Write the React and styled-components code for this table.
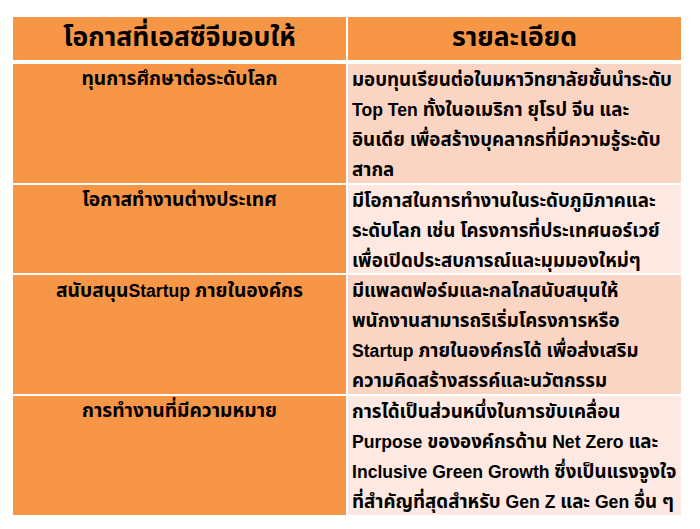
import React from "react";
import styled, { createGlobalStyle } from "styled-components";

const Global = createGlobalStyle`
  html, body { margin: 0; padding: 0; background: #ffffff; }
  body { font-family: "Noto Sans Thai", "Noto Sans", "DejaVu Sans", sans-serif; }
`;

const Page = styled.div`
  width: 700px;
  height: 529px;
  padding: 17px 19px 0 13px;
  box-sizing: border-box;
  background: #ffffff;
`;

const Table = styled.div`
  display: grid;
  grid-template-columns: 333px 333px;
  column-gap: 2px;
  row-gap: 2px;
  width: 668px;
`;

const HeadCell = styled.div`
  background: #f79646;
  height: 43px;
  margin-bottom: 2px;
  display: flex;
  align-items: center;
  justify-content: center;
  font-size: 26.5px;
  font-weight: 700;
  color: #000;
  line-height: 1;
`;

const TitleCell = styled.div`
  background: #f79646;
  height: ${(p) => p.$h}px;
  padding-top: 1px;
  box-sizing: border-box;
  text-align: center;
  font-size: 19.2px;
  font-weight: 700;
  line-height: 30px;
  color: #000;
  white-space: nowrap;
`;

const DetailCell = styled.div`
  background: ${(p) => (p.$alt ? "#fde9e1" : "#fbd5c3")};
  height: ${(p) => p.$h}px;
  padding: 1px 0 0 4px;
  box-sizing: border-box;
  font-size: 18.7px;
  font-weight: 700;
  line-height: 30px;
  color: #000;
`;

const Line = styled.div`
  white-space: nowrap;
`;

const Latin = styled.span`
  font-family: "Liberation Sans", Arial, sans-serif;
  font-size: 17.6px;
  font-weight: 700;
`;

function Mixed({ text }) {
  const parts = text.split(/([A-Za-z](?:[A-Za-z ]*[A-Za-z])?)/);
  return parts.map((p, i) =>
    i % 2 === 1 ? <Latin key={i}>{p}</Latin> : <React.Fragment key={i}>{p}</React.Fragment>
  );
}

const rows = [
  {
    title: "ทุนการศึกษาต่อระดับโลก",
    h: 119,
    lines: [
      "มอบทุนเรียนต่อในมหาวิทยาลัยชั้นนำระดับ",
      "Top Ten ทั้งในอเมริกา ยุโรป จีน และ",
      "อินเดีย เพื่อสร้างบุคลากรที่มีความรู้ระดับ",
      "สากล",
    ],
  },
  {
    title: "โอกาสทำงานต่างประเทศ",
    h: 88,
    lines: [
      "มีโอกาสในการทำงานในระดับภูมิภาคและ",
      "ระดับโลก เช่น โครงการที่ประเทศนอร์เวย์",
      "เพื่อเปิดประสบการณ์และมุมมองใหม่ๆ",
    ],
  },
  {
    title: "สนับสนุนStartup ภายในองค์กร",
    h: 119,
    lines: [
      "มีแพลตฟอร์มและกลไกสนับสนุนให้",
      "พนักงานสามารถริเริ่มโครงการหรือ",
      "Startup ภายในองค์กรได้ เพื่อส่งเสริม",
      "ความคิดสร้างสรรค์และนวัตกรรม",
    ],
  },
  {
    title: "การทำงานที่มีความหมาย",
    h: 119,
    lines: [
      "การได้เป็นส่วนหนึ่งในการขับเคลื่อน",
      "Purpose ขององค์กรด้าน Net Zero และ",
      "Inclusive Green Growth ซึ่งเป็นแรงจูงใจ",
      "ที่สำคัญที่สุดสำหรับ Gen Z และ Gen อื่น ๆ",
    ],
  },
];

export default function App() {
  return (
    <Page>
      <Global />
      <Table>
        <HeadCell>โอกาสที่เอสซีจีมอบให้</HeadCell>
        <HeadCell>รายละเอียด</HeadCell>
        {rows.map((r, i) => (
          <React.Fragment key={i}>
            <TitleCell $h={r.h}>
              <Mixed text={r.title} />
            </TitleCell>
            <DetailCell $h={r.h} $alt={i % 2 === 1}>
              {r.lines.map((l, j) => (
                <Line key={j}>
                  <Mixed text={l} />
                </Line>
              ))}
            </DetailCell>
          </React.Fragment>
        ))}
      </Table>
    </Page>
  );
}
